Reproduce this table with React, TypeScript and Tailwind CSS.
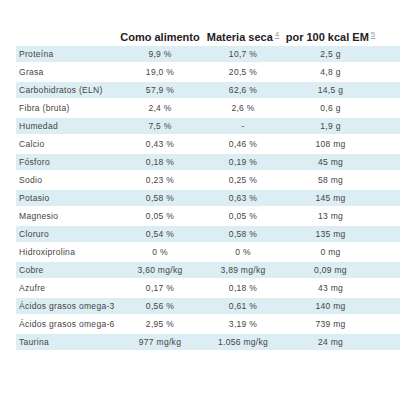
const rows: [string, string, string, string][] = [
  ["Proteína", "9,9 %", "10,7 %", "2,5 g"],
  ["Grasa", "19,0 %", "20,5 %", "4,8 g"],
  ["Carbohidratos (ELN)", "57,9 %", "62,6 %", "14,5 g"],
  ["Fibra (bruta)", "2,4 %", "2,6 %", "0,6 g"],
  ["Humedad", "7,5 %", "-", "1,9 g"],
  ["Calcio", "0,43 %", "0,46 %", "108 mg"],
  ["Fósforo", "0,18 %", "0,19 %", "45 mg"],
  ["Sodio", "0,23 %", "0,25 %", "58 mg"],
  ["Potasio", "0,58 %", "0,63 %", "145 mg"],
  ["Magnesio", "0,05 %", "0,05 %", "13 mg"],
  ["Cloruro", "0,54 %", "0,58 %", "135 mg"],
  ["Hidroxiprolina", "0 %", "0 %", "0 mg"],
  ["Cobre", "3,60 mg/kg", "3,89 mg/kg", "0,09 mg"],
  ["Azufre", "0,17 %", "0,18 %", "43 mg"],
  ["Ácidos grasos omega-3", "0,56 %", "0,61 %", "140 mg"],
  ["Ácidos grasos omega-6", "2,95 %", "3,19 %", "739 mg"],
  ["Taurina", "977 mg/kg", "1.056 mg/kg", "24 mg"],
];

const cols = "grid grid-cols-[102px_84px_82px_93px]";

function Note({ n }: { n: string }) {
  return (
    <sup className="ml-[2px] text-[8px] font-normal text-[#a3a38c] underline">
      {n}
    </sup>
  );
}

export default function App() {
  return (
    <div
      className="w-[400px] h-[400px] bg-white pt-[28px] pl-[16px]"
      style={{ fontFamily: '"Liberation Sans", Arial, sans-serif' }}
    >
      <div
        className={`${cols} h-[18px] items-center text-[11px] font-bold text-[#222] whitespace-nowrap`}
      >
        <div />
        <div className="text-center">Como alimento</div>
        <div className="text-center">
          Materia seca
          <Note n="4" />
        </div>
        <div className="text-center">
          por 100 kcal EM
          <Note n="5" />
        </div>
      </div>

      <div className="flex flex-col gap-[2px]">
        {rows.map((r, i) => (
          <div
            key={r[0]}
            className={`${cols} h-[16px] items-center text-[8.5px] tracking-[0.3px] text-[#444] whitespace-nowrap ${
              i % 2 === 0 ? "bg-[#dcedf3]" : "bg-white"
            }`}
          >
            <div className="pl-[3px]">{r[0]}</div>
            <div className="text-center">{r[1]}</div>
            <div className="text-center">{r[2]}</div>
            <div className="text-center">{r[3]}</div>
          </div>
        ))}
      </div>
    </div>
  );
}
